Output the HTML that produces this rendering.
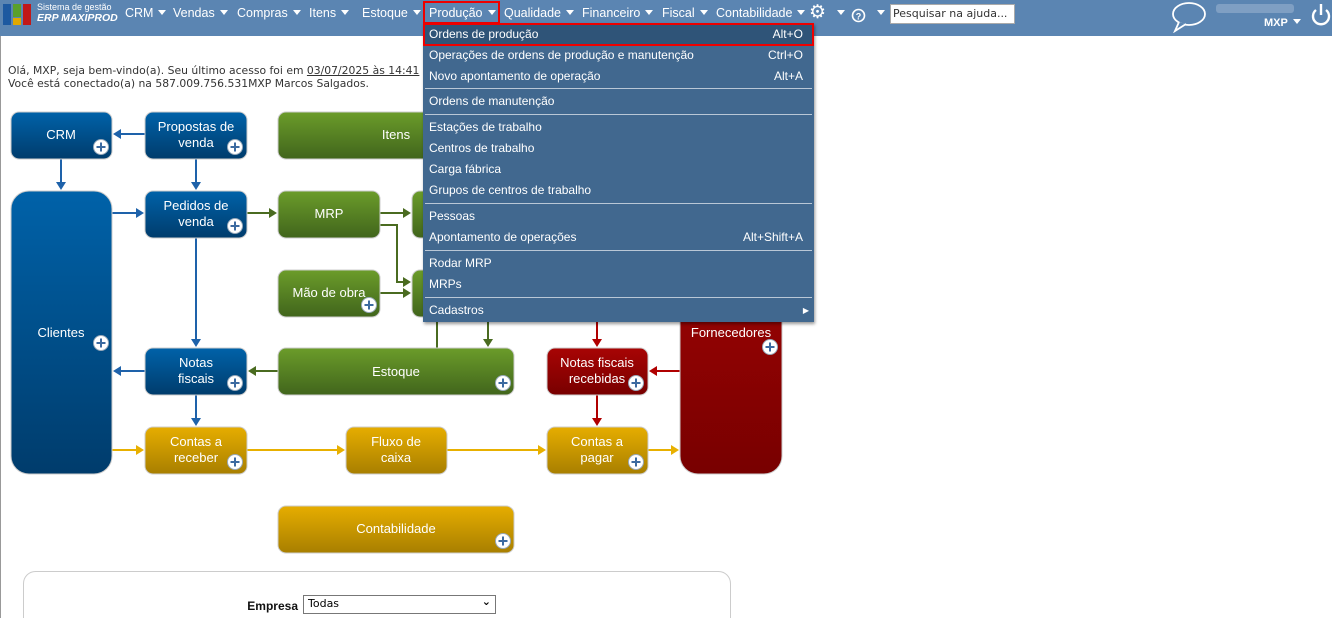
<!DOCTYPE html>
<html><head><meta charset="utf-8"><style>
*{margin:0;padding:0;box-sizing:border-box}
body{width:1332px;height:618px;overflow:hidden;background:#fff;font-family:"Liberation Sans",Tahoma,sans-serif;position:relative}
#bar{position:absolute;left:0;top:0;width:1332px;height:36px;background:#5b85b2}
.mi{position:absolute;top:6px;color:#fff;font-size:12.5px}
.car{display:inline-block;width:0;height:0;border-left:4px solid transparent;border-right:4px solid transparent;border-top:5px solid #fff;margin-left:5px;vertical-align:2px}
#page{position:absolute;left:0;top:36px;width:1px;height:582px;background:#999}
.welcome{position:absolute;left:8px;top:64px;color:#333;line-height:13px;font-family:"DejaVu Sans",sans-serif;font-size:10.8px}
#dd{position:absolute;left:423px;top:23px;width:391px;height:299px;background:#41688f;box-shadow:1px 2px 3px rgba(0,0,0,.4)}
.it{position:absolute;left:6px;right:11px;color:#fff;font-size:12px;height:21px;line-height:21px}
.it span{position:absolute;right:0}
.sep{position:absolute;left:2px;right:2px;height:1px;background:#b9c7d6}
</style></head><body>
<div id="bar">
  <svg style="position:absolute;left:3px;top:4px" width="29" height="21"><rect x="0" y="0" width="8" height="21" fill="#1d59a0"/><rect x="10" y="0" width="8" height="13" fill="#5aa02c"/><rect x="10" y="14" width="8" height="7" fill="#e0a800"/><rect x="20" y="0" width="8" height="21" fill="#c01818"/></svg>
  <div style="position:absolute;left:37px;top:2px;color:#fff;font-size:9px;line-height:11px;font-family:'Liberation Sans',sans-serif">Sistema de gestão<br><i style="font-weight:bold;font-size:10.5px">ERP MAXIPROD</i></div>
  <div class="mi" style="left:125px">CRM<i class="car"></i></div>
  <div class="mi" style="left:173px">Vendas<i class="car"></i></div>
  <div class="mi" style="left:237px">Compras<i class="car"></i></div>
  <div class="mi" style="left:309px">Itens<i class="car"></i></div>
  <div class="mi" style="left:362px">Estoque<i class="car"></i></div>
  <div style="position:absolute;left:423px;top:1px;width:77px;height:23px;border:2px solid #e00"></div>
  <div class="mi" style="left:429px">Produção<i class="car"></i></div>
  <div class="mi" style="left:504px">Qualidade<i class="car"></i></div>
  <div class="mi" style="left:582px">Financeiro<i class="car"></i></div>
  <div class="mi" style="left:662px">Fiscal<i class="car"></i></div>
  <div class="mi" style="left:716px">Contabilidade<i class="car"></i></div>
  <div class="mi" style="left:809px;font-size:19px;top:1px">⚙</div><i class="car" style="position:absolute;left:832px;top:10px"></i>
  <svg style="position:absolute;left:851px;top:8px" width="15" height="15"><circle cx="7.5" cy="7.5" r="6" fill="none" stroke="#fff" stroke-width="1.6"/><text x="7.5" y="11.5" font-size="9" fill="#fff" text-anchor="middle" font-family="Liberation Sans" font-weight="bold">?</text></svg>
  <i class="car" style="position:absolute;left:872px;top:10px"></i>
  <div style="position:absolute;left:890px;top:4px;width:125px;height:20px;background:#fff;border:1px solid #aaa;color:#333;padding:2px 2px;font-family:'DejaVu Sans',sans-serif;font-size:11px">Pesquisar na ajuda...</div>
  <svg style="position:absolute;left:1171px;top:1px" width="38" height="32"><ellipse cx="18" cy="13" rx="16" ry="11" fill="none" stroke="#fff" stroke-width="1.8"/><path d="M8 21 L4 30 L15 23" fill="#5b85b2" stroke="#fff" stroke-width="1.8"/></svg>
  <div style="position:absolute;left:1216px;top:4px;width:78px;height:9px;background:#7f9fc3;border-radius:3px"></div>
  <div style="position:absolute;left:1264px;top:17px;color:#fff;font-size:11px;font-weight:bold">MXP<i class="car"></i></div>
  <svg style="position:absolute;left:1310px;top:3px" width="22" height="24"><path d="M6 7 A8 8 0 1 0 16 7" fill="none" stroke="#fff" stroke-width="2.4"/><line x1="11" y1="1" x2="11" y2="12" stroke="#fff" stroke-width="2.4"/></svg>
</div>
<div id="page"></div>
<div class="welcome">Olá, MXP, seja bem-vindo(a). Seu último acesso foi em <u>03/07/2025 às 14:41</u><br>Você está conectado(a) na 587.009.756.531MXP Marcos Salgados.</div>

<svg style="position:absolute;left:0;top:0" width="800" height="618" font-family="Liberation Sans,Arial,sans-serif">
<defs>
<linearGradient id="gb" x1="0" y1="0" x2="0" y2="1"><stop offset="0" stop-color="#0062a9"/><stop offset="1" stop-color="#003c6c"/></linearGradient>
<linearGradient id="gg" x1="0" y1="0" x2="0" y2="1"><stop offset="0" stop-color="#6b9c2a"/><stop offset="1" stop-color="#41651c"/></linearGradient>
<linearGradient id="gr" x1="0" y1="0" x2="0" y2="1"><stop offset="0" stop-color="#a80404"/><stop offset="1" stop-color="#780000"/></linearGradient>
<linearGradient id="gy" x1="0" y1="0" x2="0" y2="1"><stop offset="0" stop-color="#e6ad00"/><stop offset="1" stop-color="#a87f00"/></linearGradient>
<g id="pl"><circle r="7.5" fill="#fff" stroke="#9ab" stroke-width="1"/><path d="M-4.5 0H4.5M0 -4.5V4.5" stroke="#3c6aa0" stroke-width="2"/></g>
</defs>
<g stroke-width="2" fill="none">
<g stroke="#1e62aa"><path d="M145 134H118M61 159V184M196 159V184M112 213H138M196 238V341M145 371H119M196 395V420"/></g>
<g stroke="#4a6b20"><path d="M247 213H271M380 213H405M380 225H397V282H405M380 293H405M437 348V318M488 318V341M278 371H254"/></g>
<g stroke="#b00000"><path d="M597 321V341M680 371H655M597 395V420"/></g>
<g stroke="#e8b000"><path d="M112 450H138M247 450H339M447 450H540M648 450H673"/></g>
</g>
<g fill="#1e62aa"><path d="M113 134l8-5v10zM61 190l-5-8h10zM196 190l-5-8h10zM144 213l-8-5v10zM196 347l-5-8h10zM113 371l8-5v10zM196 426l-5-8h10z"/></g>
<g fill="#4a6b20"><path d="M277 213l-8-5v10zM411 213l-8-5v10zM411 282l-8-5v10zM411 293l-8-5v10zM488 347l-5-8h10zM248 371l8-5v10zM433 318h8v2h-8z"/></g>
<g fill="#b00000"><path d="M597 347l-5-8h10zM649 371l8-5v10zM597 426l-5-8h10z"/></g>
<g fill="#e8b000"><path d="M144 450l-8-5v10zM345 450l-8-5v10zM546 450l-8-5v10zM679 450l-8-5v10z"/></g>
<g stroke="#ccc" stroke-width="1">
<rect x="11" y="112" width="101" height="47" rx="8" fill="url(#gb)"/>
<rect x="145" y="112" width="102" height="47" rx="8" fill="url(#gb)"/>
<rect x="278" y="112" width="236" height="47" rx="8" fill="url(#gg)"/>
<rect x="11" y="191" width="101" height="283" rx="18" fill="url(#gb)"/>
<rect x="145" y="191" width="102" height="47" rx="8" fill="url(#gb)"/>
<rect x="278" y="191" width="102" height="47" rx="8" fill="url(#gg)"/>
<rect x="412" y="191" width="102" height="47" rx="8" fill="url(#gg)"/>
<rect x="278" y="270" width="102" height="47" rx="8" fill="url(#gg)"/>
<rect x="412" y="270" width="102" height="47" rx="8" fill="url(#gg)"/>
<rect x="145" y="348" width="102" height="47" rx="8" fill="url(#gb)"/>
<rect x="278" y="348" width="236" height="47" rx="8" fill="url(#gg)"/>
<rect x="547" y="348" width="101" height="47" rx="8" fill="url(#gr)"/>
<rect x="680" y="191" width="102" height="283" rx="18" fill="url(#gr)"/>
<rect x="145" y="427" width="102" height="47" rx="8" fill="url(#gy)"/>
<rect x="346" y="427" width="101" height="47" rx="8" fill="url(#gy)"/>
<rect x="547" y="427" width="101" height="47" rx="8" fill="url(#gy)"/>
<rect x="278" y="506" width="236" height="47" rx="8" fill="url(#gy)"/>
</g>
<g fill="#fff" font-size="13" text-anchor="middle">
<text x="61" y="139">CRM</text>
<text x="196" y="131">Propostas de</text><text x="196" y="147">venda</text>
<text x="396" y="139">Itens</text>
<text x="61" y="337">Clientes</text>
<text x="196" y="210">Pedidos de</text><text x="196" y="226">venda</text>
<text x="329" y="218">MRP</text>
<text x="329" y="297">Mão de obra</text>
<text x="196" y="367">Notas</text><text x="196" y="383">fiscais</text>
<text x="396" y="376">Estoque</text>
<text x="597" y="367">Notas fiscais</text><text x="597" y="383">recebidas</text>
<text x="731" y="337">Fornecedores</text>
<text x="196" y="446">Contas a</text><text x="196" y="462">receber</text>
<text x="396" y="446">Fluxo de</text><text x="396" y="462">caixa</text>
<text x="597" y="446">Contas a</text><text x="597" y="462">pagar</text>
<text x="396" y="533">Contabilidade</text>
</g>
<use href="#pl" x="101" y="147"/><use href="#pl" x="235" y="147"/><use href="#pl" x="101" y="343"/>
<use href="#pl" x="235" y="226"/><use href="#pl" x="369" y="305"/><use href="#pl" x="235" y="383"/>
<use href="#pl" x="503" y="383"/><use href="#pl" x="636" y="383"/><use href="#pl" x="770" y="347"/>
<use href="#pl" x="235" y="462"/><use href="#pl" x="636" y="462"/><use href="#pl" x="503" y="541"/>
<rect x="23.5" y="571.5" width="707" height="60" rx="12" fill="none" stroke="#ccc"/>
<text x="298" y="610" font-size="12" font-weight="bold" text-anchor="end" fill="#111">Empresa</text>
</svg>
<div style="position:absolute;left:303px;top:595px;width:193px;height:19px;border:1px solid #777;padding:1px 4px;font-family:'DejaVu Sans',sans-serif;font-size:11px">Todas<span style="position:absolute;right:4px;top:-1px;font-size:11px;font-weight:bold">⌄</span></div>

<div id="dd">
  <div style="position:absolute;left:0;top:0;width:391px;height:23px;background:#2f5478;border:2px solid #e00"></div>
  <div class="it" style="top:1px">Ordens de produção<span>Alt+O</span></div>
  <div class="it" style="top:22px">Operações de ordens de produção e manutenção<span>Ctrl+O</span></div>
  <div class="it" style="top:43px">Novo apontamento de operação<span>Alt+A</span></div>
  <div class="sep" style="top:65px"></div>
  <div class="it" style="top:68px">Ordens de manutenção</div>
  <div class="sep" style="top:91px"></div>
  <div class="it" style="top:94px">Estações de trabalho</div>
  <div class="it" style="top:115px">Centros de trabalho</div>
  <div class="it" style="top:136px">Carga fábrica</div>
  <div class="it" style="top:157px">Grupos de centros de trabalho</div>
  <div class="sep" style="top:180px"></div>
  <div class="it" style="top:183px">Pessoas</div>
  <div class="it" style="top:204px">Apontamento de operações<span>Alt+Shift+A</span></div>
  <div class="sep" style="top:227px"></div>
  <div class="it" style="top:230px">Rodar MRP</div>
  <div class="it" style="top:251px">MRPs</div>
  <div class="sep" style="top:274px"></div>
  <div class="it" style="top:277px">Cadastros<span style="font-size:8px;right:-6px">▶</span></div>
</div>
</body></html>
